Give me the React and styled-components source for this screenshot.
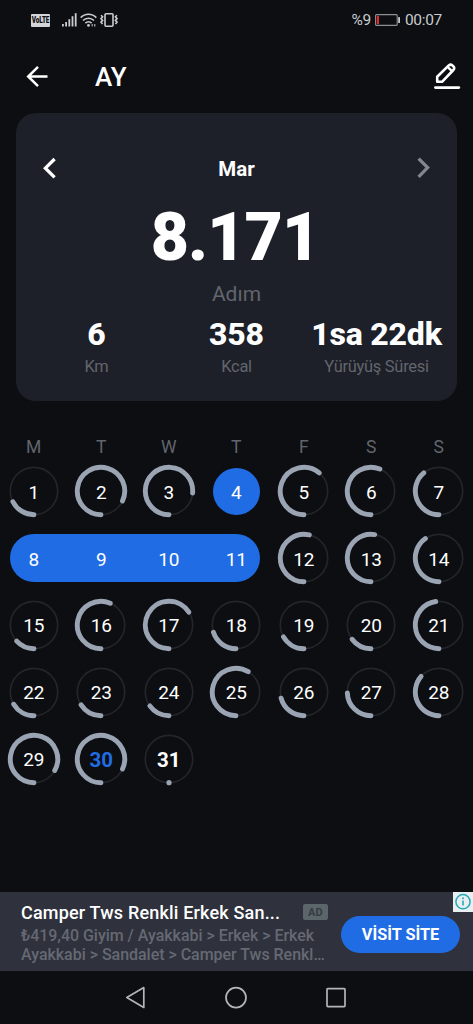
import React from 'react';
import styled, { createGlobalStyle, ThemeProvider } from 'styled-components';

const theme = {
    colors: {
        page: "#0c0e12",
        card: "#1d2028",
        ad: "#2f313c",
        blue: "#206ce4",
        ring: "#9aa4b3",
        track: "#232529",
        muted: "#62656d",
        status: "#c9cbcf",
        white: "#ffffff"
    }
};

const GlobalStyle = createGlobalStyle`
    * {
        box-sizing:border-box;
    }
    body {
        margin:0;
        background:${({theme}) => theme.colors.page};
        font-family:Roboto, "Liberation Sans", sans-serif;
    }
    svg {
        display:block;
        flex-shrink:0;
    }
`;

const Screen = styled.div`
    width:473px;
    height:1024px;
    display:flex;
    flex-direction:column;
    overflow:hidden;
    color:${({theme}) => theme.colors.white};
`;

const StatusBar = styled.div`
    height:40px;
    padding:0 31px;
    display:flex;
    align-items:center;
    justify-content:space-between;
    color:${({theme}) => theme.colors.status};
    font-size:15.5px;
`;

const StatusGroup = styled.div`
    display:flex;
    align-items:center;
    gap:${({gap}) => gap}px;
`;

const StatusText = styled.span`
    letter-spacing:-0.3px;
`;

const Volte = styled.span`
    width:19px;
    height:13px;
    margin-right:9px;
    border-radius:1px;
    background:#d4d5d8;
    color:#0c0e12;
    display:flex;
    align-items:center;
    justify-content:center;

    span{
        font-size:8.5px;
        font-weight:900;
        line-height:13px;
        letter-spacing:-0.2px;
        transform:scaleX(0.76);
    }
`;

const TopBar = styled.header`
    height:73px;
    padding:0 12px 0 25px;
    display:flex;
    align-items:center;
`;

const Title = styled.h1`
    flex:1;
    margin:1px 0 0 46px;
    font-size:26px;
    line-height:30px;
    font-weight:500;
`;

const Card = styled.section`
    height:287.5px;
    margin:0 16px;
    padding-top:40px;
    border-radius:20px;
    background:${({theme}) => theme.colors.card};
`;

const MonthRow = styled.div`
    height:30px;
    padding:0 26px;
    display:flex;
    align-items:center;
    justify-content:space-between;
`;

const Month = styled.h2`
    margin:1px 0 0;
    font-size:20.5px;
    font-weight:700;
`;

const Steps = styled.div`
    height:78px;
    margin-top:16px;
    padding-right:3px;
    font-size:66px;
    line-height:78px;
    font-weight:900;
    letter-spacing:-0.9px;
    text-align:center;
`;

const StepsLabel = styled.div`
    height:26px;
    margin-top:4px;
    color:${({theme}) => theme.colors.muted};
    font-size:21px;
    line-height:26px;
    text-align:center;
`;

const Stats = styled.div`
    display:grid;
    grid-template-columns:repeat(3, 140px);
    justify-content:center;
    margin-top:8px;
    text-align:center;
    white-space:nowrap;
`;

const StatValue = styled.div`
    font-size:32px;
    line-height:38px;
    font-weight:800;
    letter-spacing:-0.2px;
`;

const StatLabel = styled.div`
    margin-top:4px;
    color:${({theme}) => theme.colors.muted};
    font-size:16.5px;
    line-height:20px;
    letter-spacing:-0.3px;
`;

const Calendar = styled.section`
    flex:1;
    padding-top:33.5px;
    margin-right:0.5px;
`;

const Week = styled.div`
    display:grid;
    grid-template-columns:repeat(7, 1fr);
    grid-template-rows:${({height}) => height}px;
    align-items:center;
`;

const Weekday = styled.span`
    padding-top:2px;
    color:${({theme}) => theme.colors.muted};
    font-size:17.5px;
    text-align:center;
`;

const Cell = styled.div`
    grid-row:1;
    grid-column:${({col}) => col};
    display:grid;
    place-items:center;
    z-index:1;

    > * {
        grid-area:1 / 1;
    }
`;

const Selection = styled.div`
    grid-row:1;
    grid-column:${({from, to}) => `${from} / ${to + 1}`};
    height:47.5px;
    margin:0 10px;
    border-radius:24px;
    background:${({theme}) => theme.colors.blue};
`;

const DayNumber = styled.span`
    padding-top:2px;
    color:${({theme, today}) => today ? theme.colors.blue : theme.colors.white};
    font-size:${({strong}) => strong ? 20.5 : 19}px;
    font-weight:${({strong}) => strong ? 700 : 400};
    letter-spacing:${({strong}) => strong ? 0 : -0.3}px;
`;

const Ad = styled.aside`
    height:79px;
    padding-left:21px;
    display:flex;
    background:${({theme}) => theme.colors.ad};
`;

const AdText = styled.div`
    width:307px;
    padding-top:9px;
`;

const AdHeading = styled.div`
    display:flex;
    align-items:center;
    justify-content:space-between;
    height:23px;
    font-size:18px;
    font-weight:500;
    letter-spacing:0.18px;
    white-space:nowrap;
`;

const AdBadge = styled.span`
    width:25px;
    height:16px;
    margin-top:-2px;
    border-radius:2px;
    background:#5a6669;
    color:#363c44;
    font-size:11px;
    line-height:17px;
    font-weight:700;
    letter-spacing:0.2px;
    text-align:center;
`;

const AdBody = styled.div`
    margin-top:3px;
    color:#656973;
    font-size:16px;
    line-height:18.5px;
    font-weight:500;
    letter-spacing:-0.03px;
    white-space:nowrap;
`;

const VisitButton = styled.button`
    width:119px;
    height:37px;
    margin:24px 0 0 13px;
    padding:0;
    border:0;
    border-radius:19px;
    background:${({theme}) => theme.colors.blue};
    color:${({theme}) => theme.colors.white};
    font-family:inherit;
    font-size:16.3px;
    font-weight:700;
`;

const AdInfo = styled.div`
    width:20px;
    height:20px;
    margin-left:-7px;
    background:#e9eef0;
`;

const NavBar = styled.nav`
    height:53px;
    padding:0 126px 0 124.5px;
    display:flex;
    align-items:center;
    justify-content:space-between;
`;

const stats = [
    {value:"6", label:"Km"},
    {value:"358", label:"Kcal"},
    {value:"1sa 22dk", label:"Yürüyüş Süresi"}
];

const weekdays = ["M", "T", "W", "T", "F", "S", "S"];

// sweep of each day's ring in degrees, null where the day is selected
const sweeps = [
    [63, 295, 275, null, 220, 202, 140],
    [null, null, null, null, 193, 189, 145],
    [47, 203, 237, 72, 60, 53, 172],
    [59, 57, 54, 211, 75, 88, 131],
    [299, 295, 0]
];

const selections = {0:{from:4, to:4}, 1:{from:1, to:4}};
const TODAY = 30;
const LAST = 31;

function Ring({sweep}) {
    const r = 23.7;
    const a = sweep * Math.PI / 180;
    const x = 27 - r * Math.sin(a);
    const y = 27 + r * Math.cos(a);
    return (
        <svg width="54" height="54" viewBox="0 0 54 54" fill="none">
            <circle cx="27" cy="27" r={r} stroke={theme.colors.track} strokeWidth="1.7"/>
            {sweep === 0
                ? <circle cx="27" cy={27 + r} r="2.6" fill={theme.colors.ring}/>
                : <path
                    d={`M27 ${27 + r} A${r} ${r} 0 ${sweep > 180 ? 1 : 0} 1 ${x} ${y}`}
                    stroke={theme.colors.ring}
                    strokeWidth="4.9"
                    strokeLinecap="round"
                />}
        </svg>
    );
}

function SignalIcon() {
    return (
        <svg width="15" height="14" viewBox="0 0 15 14" fill={theme.colors.status}>
            <rect x="0" y="11" width="1.8" height="2.5"/>
            <rect x="3.2" y="9" width="1.8" height="4.5"/>
            <rect x="6.4" y="6.2" width="1.8" height="7.3"/>
            <rect x="9.6" y="3.2" width="1.8" height="10.3"/>
            <rect x="12.8" y="0.2" width="1.8" height="13.3"/>
        </svg>
    );
}

function WifiIcon() {
    return (
        <svg width="17" height="14" viewBox="0 0 17 14" fill="none" stroke={theme.colors.status} strokeWidth="1.6">
            <path d="M0.7 4.6C5 0.1 12 0.1 16.3 4.6"/>
            <path d="M3 7.5C6 4.4 11 4.4 14 7.5"/>
            <path d="M5.4 10.1C7.2 8.3 9.8 8.3 11.6 10.1"/>
            <circle cx="8.5" cy="12.4" r="1.4" fill={theme.colors.status} stroke="none"/>
            <path d="M12.2 13.4V11M14.8 11V13.6" strokeWidth="1"/>
        </svg>
    );
}

function VibrateIcon() {
    return (
        <svg width="18" height="14" viewBox="0 0 18 14" fill="none" stroke={theme.colors.status} strokeWidth="1.6">
            <rect x="5" y="0.8" width="8" height="12.4" rx="1"/>
            <path d="M1 2.2L2.6 3.8L1 5.6L2.6 7.4L1 9.2L2.6 11"/>
            <path d="M17 2.2L15.4 3.8L17 5.6L15.4 7.4L17 9.2L15.4 11"/>
        </svg>
    );
}

function BatteryIcon() {
    return (
        <svg width="26" height="12" viewBox="0 0 26 12">
            <rect x="0.6" y="0.6" width="21.6" height="10.8" rx="1" fill="none" stroke="#8e9095" strokeWidth="1.1"/>
            <rect x="1.8" y="2" width="2.2" height="8" fill="#dc2c2c"/>
            <rect x="23.2" y="3" width="1.8" height="6" rx="0.6" fill={theme.colors.status}/>
        </svg>
    );
}

function App() {
    let day = 0;

    return (
        <ThemeProvider theme={theme}>
            <GlobalStyle/>
            <Screen>
                <StatusBar>
                    <StatusGroup gap={3}>
                        <Volte><span>VoLTE</span></Volte>
                        <SignalIcon/>
                        <WifiIcon/>
                        <VibrateIcon/>
                    </StatusGroup>
                    <StatusGroup gap={4}>
                        <StatusText>%9</StatusText>
                        <BatteryIcon/>
                        <StatusText>00:07</StatusText>
                    </StatusGroup>
                </StatusBar>

                <TopBar>
                    <svg width="24" height="24" viewBox="0 0 24 24" fill="none" stroke="#fff" strokeWidth="2.5">
                        <path d="M22.5 11.5H3.5M13 1.9L3.2 11.5L13 21.1"/>
                    </svg>
                    <Title>AY</Title>
                    <svg width="28" height="28" viewBox="0 0 28 28" fill="none" stroke="#fff" strokeLinejoin="round">
                        <path d="M4.2 18.8V13.8L15.8 2.4Q17.6 0.9 19.4 2.4L20.4 3.4Q22 5.2 20.4 7L9 18.8Z" strokeWidth="2.6"/>
                        <path d="M14.6 3.8L19.2 8.4" strokeWidth="2.4"/>
                        <path d="M2.4 24.6H25.8" strokeWidth="2.8" strokeLinecap="round"/>
                    </svg>
                </TopBar>

                <Card>
                    <MonthRow>
                        <svg width="14" height="22" viewBox="0 0 14 22" fill="none" stroke="#fff" strokeWidth="3.3">
                            <path d="M12.6 2L3.4 11.2L12.6 20.4"/>
                        </svg>
                        <Month>Mar</Month>
                        <svg width="14" height="22" viewBox="0 0 14 22" fill="none" stroke="#83868d" strokeWidth="3.3">
                            <path d="M1.6 1.6L10.6 10.6L1.6 19.8"/>
                        </svg>
                    </MonthRow>
                    <Steps>8.171</Steps>
                    <StepsLabel>Adım</StepsLabel>
                    <Stats>
                        {stats.map(({value, label}) => (
                            <div key={label}>
                                <StatValue>{value}</StatValue>
                                <StatLabel>{label}</StatLabel>
                            </div>
                        ))}
                    </Stats>
                </Card>

                <Calendar>
                    <Week height={24}>
                        {weekdays.map((name, i) => <Weekday key={i}>{name}</Weekday>)}
                    </Week>
                    {sweeps.map((week, w) => (
                        <Week key={w} height={66.8}>
                            {selections[w] && <Selection {...selections[w]}/>}
                            {week.map((sweep, i) => {
                                day += 1;
                                return (
                                    <Cell key={day} col={i + 1}>
                                        {sweep !== null && <Ring sweep={sweep}/>}
                                        <DayNumber today={day === TODAY} strong={day === TODAY || day === LAST}>
                                            {day}
                                        </DayNumber>
                                    </Cell>
                                );
                            })}
                        </Week>
                    ))}
                </Calendar>

                <Ad>
                    <AdText>
                        <AdHeading>
                            <span>Camper Tws Renkli Erkek San...</span>
                            <AdBadge>AD</AdBadge>
                        </AdHeading>
                        <AdBody>
                            ₺419,40 Giyim / Ayakkabi &gt; Erkek &gt; Erkek<br/>
                            Ayakkabi &gt; Sandalet &gt; Camper Tws Renkl…
                        </AdBody>
                    </AdText>
                    <VisitButton>VİSİT SİTE</VisitButton>
                    <AdInfo>
                        <svg width="20" height="20" viewBox="0 0 20 20" fill="none" stroke="#28a9b8">
                            <circle cx="10" cy="9.7" r="7.1" strokeWidth="1.5"/>
                            <path d="M10 8.4V13.6" strokeWidth="1.6"/>
                            <circle cx="10" cy="6.2" r="1" fill="#28a9b8" stroke="none"/>
                        </svg>
                    </AdInfo>
                </Ad>

                <NavBar>
                    <svg width="22" height="24" viewBox="0 0 22 24" fill="none" stroke="#b3b5b9" strokeWidth="1.7" strokeLinejoin="round">
                        <path d="M18.8 1.6V21.4L1.8 11.5Z"/>
                    </svg>
                    <svg width="24" height="24" viewBox="0 0 24 24" fill="none" stroke="#b3b5b9" strokeWidth="1.7">
                        <circle cx="12" cy="11.6" r="10"/>
                    </svg>
                    <svg width="22" height="22" viewBox="0 0 22 22" fill="none" stroke="#b3b5b9" strokeWidth="1.7">
                        <rect x="2" y="1.6" width="18" height="18" rx="0.8"/>
                    </svg>
                </NavBar>
            </Screen>
        </ThemeProvider>
    );
}

export default App;
